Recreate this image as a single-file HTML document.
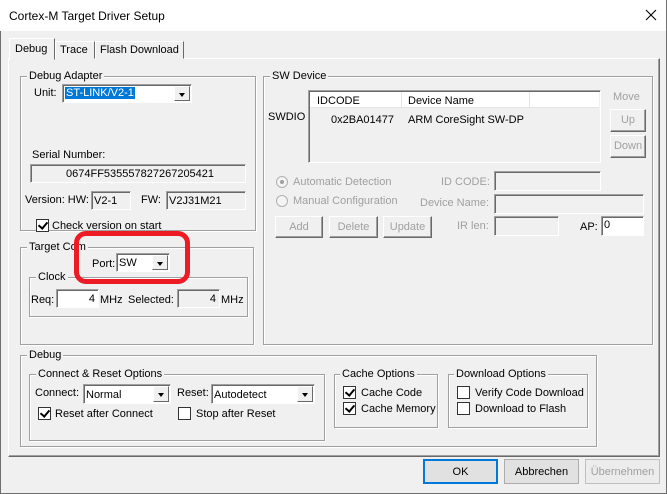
<!DOCTYPE html>
<html><head><meta charset="utf-8"><style>
*{box-sizing:border-box}
body{margin:0;width:667px;height:494px;overflow:hidden;background:#f0f0f0;font-family:"Liberation Sans",Arial,sans-serif;font-size:11px;color:#000;position:relative}
.a{position:absolute;white-space:nowrap;margin-top:1px}
.win{position:absolute;left:0;top:0;width:667px;height:494px;border:1px solid #6e6e6e;border-top:none}
.title{position:absolute;left:0;top:0;width:666px;height:31px;background:#fff}
.grp{position:absolute;border:1px solid #a0a0a0;box-shadow:1px 1px 0 #fff inset,1px 1px 0 #fff}
.gl{position:absolute;background:#f0f0f0;padding:0 2px;top:-7px;left:6px;white-space:nowrap}
.edit{position:absolute;background:#fff;border:1px solid;border-color:#a0a0a0 #fff #fff #a0a0a0;box-shadow:inset 1px 1px 0 #696969}
.ro{background:#f0f0f0}
.dis{color:#a0a0a0}
.btn{position:absolute;border:1px solid #adadad;background:#e1e1e1;text-align:center}
.btn3{position:absolute;background:#f0f0f0;border:1px solid;border-color:#fff #696969 #696969 #fff;box-shadow:inset -1px -1px 0 #a0a0a0;text-align:center}
.arr{position:absolute;right:1px;top:1px;bottom:1px;width:16px;background:#f0f0f0;border:1px solid;border-color:#fff #696969 #696969 #fff}
.arr:after{content:"";position:absolute;left:4px;top:6px;border-left:3.5px solid transparent;border-right:3.5px solid transparent;border-top:4px solid #000}
.cb{position:absolute;width:13px;height:13px;background:#fff;border:1px solid #333}
.cb.c:after{content:"";position:absolute;left:3px;top:0px;width:4px;height:7px;border:solid #000;border-width:0 2px 2px 0;transform:rotate(40deg)}
.rad{position:absolute;width:12px;height:12px;border-radius:50%;border:1px solid #b0b0b0;background:#f4f4f4}
</style></head><body>
<div class="win"></div>
<div class="title"></div>
<div class="a" style="left:9px;top:8px;font-size:12px">Cortex-M Target Driver Setup</div>
<svg style="position:absolute;left:645px;top:9px" width="12" height="12"><path d="M1 1L11 11M11 1L1 11" stroke="#000" stroke-width="1.1"/></svg>

<div style="position:absolute;left:8px;top:58px;width:652px;height:399px;border:1px solid;border-color:#fff #696969 #696969 #fff;box-shadow:inset -1px -1px 0 #a0a0a0"></div>
<div style="position:absolute;left:55px;top:41px;width:40px;height:18px;border:1px solid;border-color:#fff #696969 transparent #fff;background:#f0f0f0"></div>
<div class="a" style="left:60px;top:43px">Trace</div>
<div style="position:absolute;left:95px;top:41px;width:89px;height:18px;border:1px solid;border-color:#fff #696969 transparent #fff;background:#f0f0f0"></div>
<div class="a" style="left:100px;top:43px">Flash Download</div>
<div style="position:absolute;left:9px;top:38px;width:46px;height:22px;border:1px solid;border-color:#fff #696969 transparent #fff;background:#f0f0f0"></div>
<div class="a" style="left:15px;top:42px">Debug</div>

<div class="grp" style="left:20px;top:76px;width:236px;height:155px"><span class="gl">Debug Adapter</span></div>
<div class="a" style="left:34px;top:86px">Unit:</div>
<div class="edit" style="left:62px;top:84px;width:130px;height:19px"><span class="a" style="left:2px;top:1px;background:#0078d7;color:#fff;padding:0 1px">ST-LINK/V2-1</span><div class="arr"></div></div>
<div class="a" style="left:32px;top:148px">Serial Number:</div>
<div class="edit ro" style="left:30px;top:164px;width:216px;height:19px"><span class="a" style="left:35px;top:2px">0674FF535557827267205421</span></div>
<div class="a" style="left:25px;top:193px">Version: HW:</div>
<div class="edit ro" style="left:91px;top:191px;width:40px;height:19px"><span class="a" style="left:2px;top:2px">V2-1</span></div>
<div class="a" style="left:141px;top:193px">FW:</div>
<div class="edit ro" style="left:166px;top:191px;width:80px;height:19px"><span class="a" style="left:2px;top:2px">V2J31M21</span></div>
<div class="cb c" style="left:36px;top:219px"></div>
<div class="a" style="left:52px;top:219px">Check version on start</div>

<div class="grp" style="left:20px;top:247px;width:234px;height:98px"><span class="gl">Target Com</span></div>
<div class="a" style="left:92px;top:257px">Port:</div>
<div class="edit" style="left:116px;top:253px;width:54px;height:19px"><span class="a" style="left:2px;top:2px">SW</span><div class="arr"></div></div>
<div class="grp" style="left:29px;top:277px;width:219px;height:40px"><span class="gl">Clock</span></div>
<div class="a" style="left:31px;top:293px">Req:</div>
<div class="edit" style="left:56px;top:289px;width:43px;height:19px"><span class="a" style="right:3px;top:2px">4</span></div>
<div class="a" style="left:100px;top:293px">MHz</div>
<div class="a" style="left:128px;top:293px">Selected:</div>
<div class="edit ro" style="left:177px;top:289px;width:43px;height:19px"><span class="a" style="right:3px;top:2px">4</span></div>
<div class="a" style="left:221px;top:293px">MHz</div>
<div style="position:absolute;left:74px;top:231px;width:116px;height:53px;border:5px solid #ed1c24;border-radius:12px"></div>

<div class="grp" style="left:263px;top:76px;width:390px;height:269px"><span class="gl">SW Device</span></div>
<div class="a" style="left:268px;top:110px">SWDIO</div>
<div class="edit" style="left:308px;top:90px;width:293px;height:73px;background:#f0f0f0">
<div style="position:absolute;left:1px;top:1px;width:289px;height:16px;background:#fff;border-bottom:1px solid #e5e5e5"></div>
<div style="position:absolute;left:92px;top:1px;width:1px;height:16px;background:#e5e5e5"></div>
<div style="position:absolute;left:220px;top:1px;width:1px;height:16px;background:#e5e5e5"></div>
<span class="a" style="left:8px;top:3px">IDCODE</span><span class="a" style="left:99px;top:3px">Device Name</span>
<span class="a" style="left:22px;top:22px">0x2BA01477</span><span class="a" style="left:99px;top:22px">ARM CoreSight SW-DP</span></div>
<div class="a dis" style="left:613px;top:90px">Move</div>
<div class="btn3 dis" style="left:610px;top:109px;width:36px;height:23px;line-height:21px">Up</div>
<div class="btn3 dis" style="left:610px;top:135px;width:36px;height:23px;line-height:21px">Down</div>
<div class="rad" style="left:276px;top:176px"><div style="position:absolute;left:3px;top:3px;width:4px;height:4px;border-radius:50%;background:#a0a0a0"></div></div>
<div class="a dis" style="left:293px;top:175px">Automatic Detection</div>
<div class="rad" style="left:276px;top:195px"></div>
<div class="a dis" style="left:293px;top:194px">Manual Configuration</div>
<div class="a dis" style="left:441px;top:175px">ID CODE:</div>
<div class="edit ro" style="left:494px;top:171px;width:107px;height:20px"></div>
<div class="a dis" style="left:420px;top:196px">Device Name:</div>
<div class="edit ro" style="left:494px;top:194px;width:150px;height:20px"></div>
<div class="btn3 dis" style="left:275px;top:216px;width:48px;height:22px;line-height:21px">Add</div>
<div class="btn3 dis" style="left:329px;top:216px;width:49px;height:22px;line-height:21px">Delete</div>
<div class="btn3 dis" style="left:383px;top:216px;width:49px;height:22px;line-height:21px">Update</div>
<div class="a dis" style="left:457px;top:219px">IR len:</div>
<div class="edit ro" style="left:494px;top:216px;width:65px;height:20px"></div>
<div class="a" style="left:580px;top:220px">AP:</div>
<div class="edit" style="left:601px;top:216px;width:43px;height:20px"><span class="a" style="left:2px;top:1px">0</span></div>

<div class="grp" style="left:20px;top:355px;width:577px;height:92px"><span class="gl">Debug</span></div>
<div class="grp" style="left:29px;top:374px;width:296px;height:67px"><span class="gl">Connect &amp; Reset Options</span></div>
<div class="a" style="left:35px;top:386px">Connect:</div>
<div class="edit" style="left:83px;top:384px;width:88px;height:20px"><span class="a" style="left:2px;top:3px">Normal</span><div class="arr"></div></div>
<div class="a" style="left:177px;top:386px">Reset:</div>
<div class="edit" style="left:211px;top:384px;width:104px;height:20px"><span class="a" style="left:2px;top:3px">Autodetect</span><div class="arr"></div></div>
<div class="cb c" style="left:38px;top:407px"></div>
<div class="a" style="left:55px;top:407px">Reset after Connect</div>
<div class="cb" style="left:178px;top:407px"></div>
<div class="a" style="left:196px;top:407px">Stop after Reset</div>
<div class="grp" style="left:334px;top:374px;width:104px;height:54px"><span class="gl" style="left:5px">Cache Options</span></div>
<div class="cb c" style="left:343px;top:386px"></div>
<div class="a" style="left:361px;top:386px">Cache Code</div>
<div class="cb c" style="left:343px;top:402px"></div>
<div class="a" style="left:361px;top:402px">Cache Memory</div>
<div class="grp" style="left:448px;top:374px;width:140px;height:54px"><span class="gl" style="left:5px">Download Options</span></div>
<div class="cb" style="left:457px;top:386px"></div>
<div class="a" style="left:475px;top:386px">Verify Code Download</div>
<div class="cb" style="left:457px;top:402px"></div>
<div class="a" style="left:475px;top:402px">Download to Flash</div>

<div class="btn" style="left:423px;top:459px;width:75px;height:25px;line-height:24px;border-color:#0078d7;box-shadow:inset 0 0 0 1px #0078d7">OK</div>
<div class="btn" style="left:504px;top:459px;width:75px;height:25px;line-height:24px">Abbrechen</div>
<div class="btn dis" style="left:585px;top:459px;width:75px;height:25px;line-height:24px;background:#ececec;border-color:#bfbfbf">Übernehmen</div>
</body></html>
